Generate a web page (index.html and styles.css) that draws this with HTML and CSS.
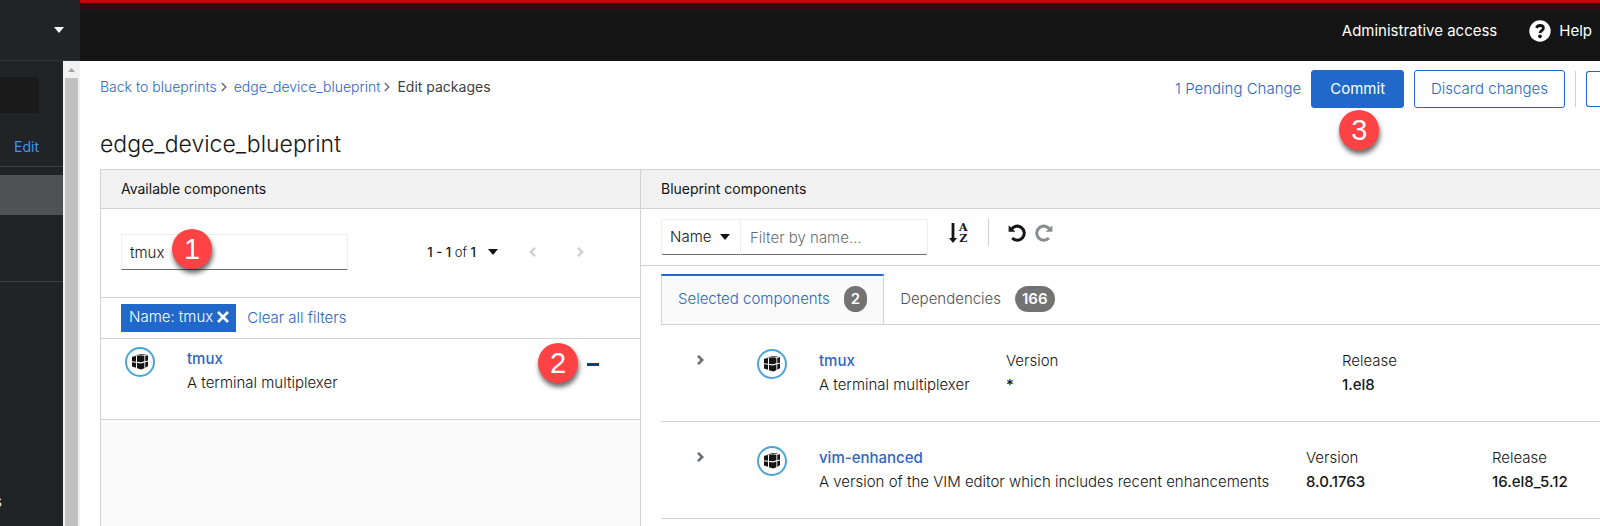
FILE: index.html
```
<!DOCTYPE html>
<html lang="en">
<head>
<meta charset="utf-8">
<title>Edit packages</title>
<link rel="stylesheet" href="styles.css">
</head>
<body>
<svg class="sprite" aria-hidden="true">
  <symbol id="caret" viewBox="0 0 10 6"><path fill="currentColor" d="M0 0h10L5 6z"/></symbol>
  <symbol id="chevron" viewBox="0 0 7 10"><path fill="none" stroke="currentColor" stroke-width="2.6" d="M1 .9 5.2 5 1 9.1"/></symbol>
  <symbol id="angle" viewBox="0 0 6 10"><path fill="none" stroke="currentColor" stroke-width="1.5" d="M.8 1 4.8 5 .8 9"/></symbol>
  <symbol id="undo" viewBox="0 0 18 18"><path fill="none" stroke="currentColor" stroke-width="3" d="M3.2 5.6A7 7 0 1 1 4.2 14"/><path fill="currentColor" d="M.6 1.2v6.600h6.800z"/></symbol>
  <symbol id="package" viewBox="0 0 30 30">
    <circle cx="15" cy="15" r="14" fill="#fff" stroke="#4aa5d8" stroke-width="2"/>
    <path fill="#151515" d="M7 9.800 11 9v5.800L7 14.300zM12 9l7.400-.2v5.500l-3.200 1-4.200-.5zM20.300 8.700 23 8.200v5.200l-2.700.8zM9.500 8.600 15.500 7.300l6.500.3-5.500 1zM7 15.200l4 .6v5L7 19.400zM12 15.900l4.200.5 3.200-1v5.900l-3.200 1.300-4.200-1.300zM20.300 15.200l2.700-.8v4.800l-2.700 1.500z"/>
  </symbol>
</svg>

<div class="shell">
  <aside class="side">
    <header class="side-head">
      <button class="plain" aria-label="Switch host"><svg class="caret"><use href="#caret"/></svg></button>
    </header>
    <div class="side-body">
      <nav class="nav">
        <input class="nav-search" type="search" aria-label="Search">
        <a class="nav-edit" href="#">Edit</a>
        <a class="nav-active" href="#" aria-label="Image builder"></a>
        <div class="nav-rest"><a class="nav-clipped" href="#">s</a></div>
      </nav>
      <div class="scrollbar">
        <svg class="scroll-arrow" viewBox="0 0 7 4"><path fill="#a3a3a3" d="M0 4 3.500 0 7 4z"/></svg>
        <div class="scroll-thumb"></div>
      </div>
    </div>
  </aside>

  <div class="page">
    <header class="topbar">
      <button class="plain">Administrative access</button>
      <button class="plain help">
        <svg class="help-icon" viewBox="0 0 22 22"><circle cx="11" cy="11" r="10.700" fill="#fff"/><path fill="none" stroke="#151515" stroke-width="2.800" d="M7.400 7.900C8.200 6.200 9.400 5.500 11 5.500c1.900 0 3.400 1 3.400 2.700 0 2.300-3.300 2.300-3.300 4.700"/><circle cx="11" cy="16.300" r="1.900" fill="#151515"/></svg>
        Help
      </button>
    </header>

    <main class="content">
      <div class="crumb-row">
        <nav class="crumbs" aria-label="Breadcrumb">
          <a href="#">Back to blueprints</a>
          <svg class="angle"><use href="#angle"/></svg>
          <a href="#">edge_device_blueprint</a>
          <svg class="angle"><use href="#angle"/></svg>
          <span class="current">Edit packages</span>
        </nav>
        <div class="actions">
          <a class="pending" href="#">1 Pending Change</a>
          <div class="marked">
            <button class="btn primary">Commit</button>
            <span class="marker marker-commit">3</span>
          </div>
          <button class="btn">Discard changes</button>
          <span class="action-rule"></span>
          <button class="btn cut" aria-label="More actions"></button>
        </div>
      </div>
      <h1>edge_device_blueprint</h1>

      <div class="panels">
        <section class="available">
          <h2>Available components</h2>
          <div class="search-row">
            <div class="marked search">
              <input class="text" type="text" value="tmux" aria-label="Filter available components">
              <span class="marker marker-search">1</span>
            </div>
            <div class="pager">
              <button class="plain count"><span><b>1 - 1</b> of <b>1</b></span><svg class="caret"><use href="#caret"/></svg></button>
              <button class="plain" aria-label="Previous page" disabled><svg class="chevron back"><use href="#chevron"/></svg></button>
              <button class="plain" aria-label="Next page" disabled><svg class="chevron"><use href="#chevron"/></svg></button>
            </div>
          </div>
          <div class="filter-row">
            <button class="tag">Name: tmux <svg viewBox="0 0 12 12"><path stroke="#fff" stroke-width="2.600" d="m1 1 10 10m0-10-10 10"/></svg></button>
            <a href="#">Clear all filters</a>
          </div>
          <div class="result">
            <svg class="package"><use href="#package"/></svg>
            <div class="info"><a class="name" href="#">tmux</a><span>A terminal multiplexer</span></div>
            <div class="marked remove">
              <button class="plain" aria-label="Remove tmux"><span class="minus"></span></button>
              <span class="marker marker-remove">2</span>
            </div>
          </div>
        </section>

        <section class="blueprint">
          <h2>Blueprint components</h2>
          <div class="toolbar">
            <div class="filter-group">
              <div class="select-wrap">
                <select aria-label="Filter type"><option>Name</option></select>
                <svg class="caret"><use href="#caret"/></svg>
              </div>
              <input class="text" type="text" placeholder="Filter by name..." aria-label="Filter by name">
            </div>
            <button class="plain sort" aria-label="Sort A to Z">
              <svg class="sort-arrow" viewBox="0 0 8 20"><path fill="currentColor" d="M2.600 0h2.800v15H8L4 20 0 15h2.600z"/></svg>
              <span class="sort-letters"><span>A</span><span>Z</span></span>
            </button>
            <span class="tool-rule"></span>
            <button class="plain history" aria-label="Undo"><svg class="undo"><use href="#undo"/></svg></button>
            <button class="plain history redo" aria-label="Redo" disabled><svg class="undo"><use href="#undo"/></svg></button>
          </div>
          <div class="tabs" role="tablist">
            <button class="tab selected" role="tab" aria-selected="true">Selected components <span class="badge">2</span></button>
            <button class="tab" role="tab" aria-selected="false">Dependencies <span class="badge">166</span></button>
          </div>
          <ul class="list">
            <li>
              <button class="plain expand" aria-label="Expand tmux"><svg class="chevron"><use href="#chevron"/></svg></button>
              <svg class="package"><use href="#package"/></svg>
              <div class="cols short">
                <div class="info"><a class="name" href="#">tmux</a><span>A terminal multiplexer</span></div>
                <div class="info"><span>Version</span><b>*</b></div>
                <div class="info"><span>Release</span><b>1.el8</b></div>
              </div>
            </li>
            <li>
              <button class="plain expand" aria-label="Expand vim-enhanced"><svg class="chevron"><use href="#chevron"/></svg></button>
              <svg class="package"><use href="#package"/></svg>
              <div class="cols long">
                <div class="info"><a class="name" href="#">vim-enhanced</a><span>A version of the VIM editor which includes recent enhancements</span></div>
                <div class="info"><span>Version</span><b>8.0.1763</b></div>
                <div class="info"><span>Release</span><b>16.el8_5.12</b></div>
              </div>
            </li>
          </ul>
        </section>
      </div>
    </main>
  </div>
</div>
</body>
</html>
```
FILE: styles.css
```
* { box-sizing: border-box; }

body {
  margin: 0;
  background: #fff;
  color: #151515;
  font: 300 15px/24px Inter, "Open Sans", sans-serif;
  overflow: hidden;
}

a { color: #2b66c6; text-decoration: none; }
b { font-weight: 500; }
button, input, select { font: inherit; color: inherit; }
button { cursor: pointer; }
svg { display: block; flex: none; }

.sprite { position: absolute; width: 0; height: 0; }
.plain { display: flex; align-items: center; padding: 0; border: 0; background: none; }
.caret { width: 10px; height: 6px; }
.chevron { width: 7px; height: 10px; }
.back { transform: rotate(180deg); }
.angle { width: 6px; height: 10px; color: #6a6e73; }
.package { width: 30px; height: 30px; }

.shell { display: flex; min-height: 100vh; }

/* Sidebar */
.side { display: flex; flex-direction: column; flex: none; width: 80px; background: #212427; color: #fff; }
.side-head { display: flex; align-items: center; justify-content: flex-end; height: 61px; padding-right: 16px; border-bottom: 1px solid #2f3235; }
.side-body { display: flex; flex: 1; }
.nav { display: flex; flex: 1; flex-direction: column; }
.nav-search { width: 39px; height: 36px; margin-top: 16px; border: 0; border-radius: 0 3px 3px 0; background: #1a1a1a; }
.nav-edit { padding: 22px 24px 7px 14px; border-bottom: 1px solid #3c3f42; color: #4394e5; font-size: 14px; font-weight: 400; }
.nav-active { height: 40px; margin-top: 8px; background: #4f5255; }
.nav-rest { margin-top: 66px; padding-top: 208px; border-top: 1px solid #3c3f42; }
.nav-clipped { display: flex; justify-content: flex-end; width: 2px; overflow: hidden; color: #fff; }
.scrollbar { display: flex; flex-direction: column; align-items: center; width: 17px; padding-top: 7px; background: #f1f1f1; }
.scroll-arrow { width: 7px; height: 4px; margin-bottom: 6px; }
.scroll-thumb { flex: 1; width: 13px; background: #c1c1c1; }

/* Top bar */
.page { flex: 1; min-width: 0; }
.topbar {
  display: flex; align-items: center; justify-content: flex-end; gap: 32px;
  height: 61px; padding-right: 8px;
  border-top: 3px solid #c9000c;
  background: linear-gradient(#44090d, #151515 9px);
  color: #fff; font-weight: 400;
}
.topbar .plain { height: 58px; padding-bottom: 3px; }
.help { gap: 8px; }
.help-icon { width: 22px; height: 22px; }

/* Page heading */
.content { padding-left: 20px; }
.crumb-row { display: flex; justify-content: space-between; height: 57px; padding-top: 9px; }
.crumbs { display: flex; align-items: center; gap: 4px; height: 34px; font-size: 14px; }
.crumbs svg { margin-right: 3px; }
.current { font-weight: 400; color: #3c3f42; }
.actions { display: flex; align-items: center; gap: 10px; height: 38px; }
.btn { height: 38px; padding: 0 16px; border: 1px solid #2069ca; border-radius: 3px; background: #fff; color: #2b66c6; }
.btn.primary { padding: 0 18px; background: #2069ca; color: #fff; font-weight: 400; }
.btn.cut { width: 14px; height: 36px; padding: 0; border-right: 0; border-radius: 3px 0 0 3px; }
.action-rule { width: 1px; height: 36px; background: #d2d2d2; }
h1 { margin: 8px 0 7px; font-size: 23px; font-weight: 300; line-height: 36px; }

/* Numbered markers lying over the controls */
.marked { position: relative; }
.marker {
  position: absolute; width: 40px; height: 40px; border-radius: 50%;
  background: #ff4344; color: #fff; box-shadow: 1px 4px 5px rgba(0, 0, 0, .6);
  font: 400 29px/40px "Liberation Sans", Arial, sans-serif; text-align: center;
}
.marker-search { left: 51px; top: -5px; }
.marker-commit { left: 28px; top: 40px; z-index: 1; }
.marker-remove { right: 21px; top: -4px; }

/* Panels */
.panels { display: grid; grid-template-columns: 540px 1fr; min-height: 357px; border-top: 1px solid #d2d2d2; }
h2 { height: 39px; margin: 0; padding-left: 20px; border-bottom: 1px solid #d2d2d2; background: #f1f1f1; font-size: 14px; font-weight: 400; line-height: 38px; }
.available { border-left: 1px solid #d2d2d2; background: #fafafa; }
.blueprint { border-left: 1px solid #d2d2d2; min-width: 0; }
.text { height: 36px; padding: 0 8px; border: 1px solid #ededed; border-bottom-color: #6a6e73; border-radius: 0; background: #fff; outline: 0; }
.text::placeholder { color: #6a6e73; opacity: 1; }
.search-row { display: flex; justify-content: space-between; height: 89px; padding: 25px 56px 0 20px; border-bottom: 1px solid #d2d2d2; background: #fff; }
.search, .search .text { width: 227px; }
.pager { display: flex; align-items: center; gap: 41px; height: 36px; color: #d2d2d2; }
.count { gap: 12px; margin-right: -10px; color: #151515; font-size: 13px; }
.filter-row { display: flex; align-items: center; gap: 11px; height: 41px; padding-left: 20px; border-bottom: 1px solid #d2d2d2; background: #fff; }
.tag { display: flex; align-items: center; gap: 4px; height: 28px; padding: 0 7px 2px 8px; border: 0; background: #2069ca; color: #fff; }
.tag svg { width: 12px; height: 12px; }
.result { display: flex; align-items: flex-start; height: 81px; padding: 8px 41px 0 24px; border-bottom: 1px solid #d2d2d2; background: #fff; }
.result .info { flex: 1; margin-left: 32px; }
.info { display: flex; flex-direction: column; white-space: nowrap; }
.name { font-weight: 500; }
.remove { padding-top: 16px; }
.minus { width: 12px; height: 3px; background: #004080; }

/* Blueprint toolbar */
.toolbar { display: flex; align-items: flex-start; height: 57px; padding: 10px 0 0 20px; border-bottom: 1px solid #d2d2d2; }
.filter-group { display: flex; }
.filter-group .text { width: 187px; border-left: 0; border-radius: 0 3px 3px 0; padding-left: 9px; }
.select-wrap { position: relative; }
.select-wrap .caret { position: absolute; right: 11px; top: 15px; pointer-events: none; }
select { width: 80px; height: 36px; padding: 0 8px; appearance: none; border: 1px solid #ededed; border-bottom-color: #6a6e73; border-radius: 3px 0 0 3px; background: #fff; }
.sort { gap: 2px; margin: 3px 20px 0 21px; }
.sort-arrow { width: 8px; height: 20px; }
.sort-letters { display: flex; flex-direction: column; font: 700 11px/11px "DejaVu Serif", serif; }
.tool-rule { width: 1px; height: 27px; margin-right: 19px; background: #d2d2d2; }
.history { margin: 5px 9px 0 0; }
.undo { width: 18px; height: 18px; }
.redo { color: #8a8d90; transform: scaleX(-1); }

/* Tabs and list */
.tabs { display: flex; margin: 8px 0 0 20px; border-bottom: 1px solid #d2d2d2; }
.tab { display: flex; align-items: center; gap: 14px; height: 50px; padding: 0 16px 2px; border: 0; border-top: 2px solid transparent; background: none; color: #4f5255; }
.tab.selected { border: solid #d2d2d2; border-width: 2px 1px 0; border-top-color: #2069ca; background: #fafafa; color: #2b66c6; }
.badge { padding: 1px 7px; border-radius: 13px; background: #737373; color: #fff; font-weight: 600; }
.list { margin: 0 0 0 20px; padding: 0; list-style: none; }
.list li { display: flex; align-items: flex-start; height: 97px; padding-top: 24px; border-bottom: 1px solid #d2d2d2; }
.expand { width: 8px; margin: 6px 52px 0 36px; color: #6a6e73; }
.cols { display: grid; flex: 1; margin-left: 32px; }
.short { grid-template-columns: 187fr 336fr 258fr; }
.long { grid-template-columns: 487fr 186fr 108fr; }
```
